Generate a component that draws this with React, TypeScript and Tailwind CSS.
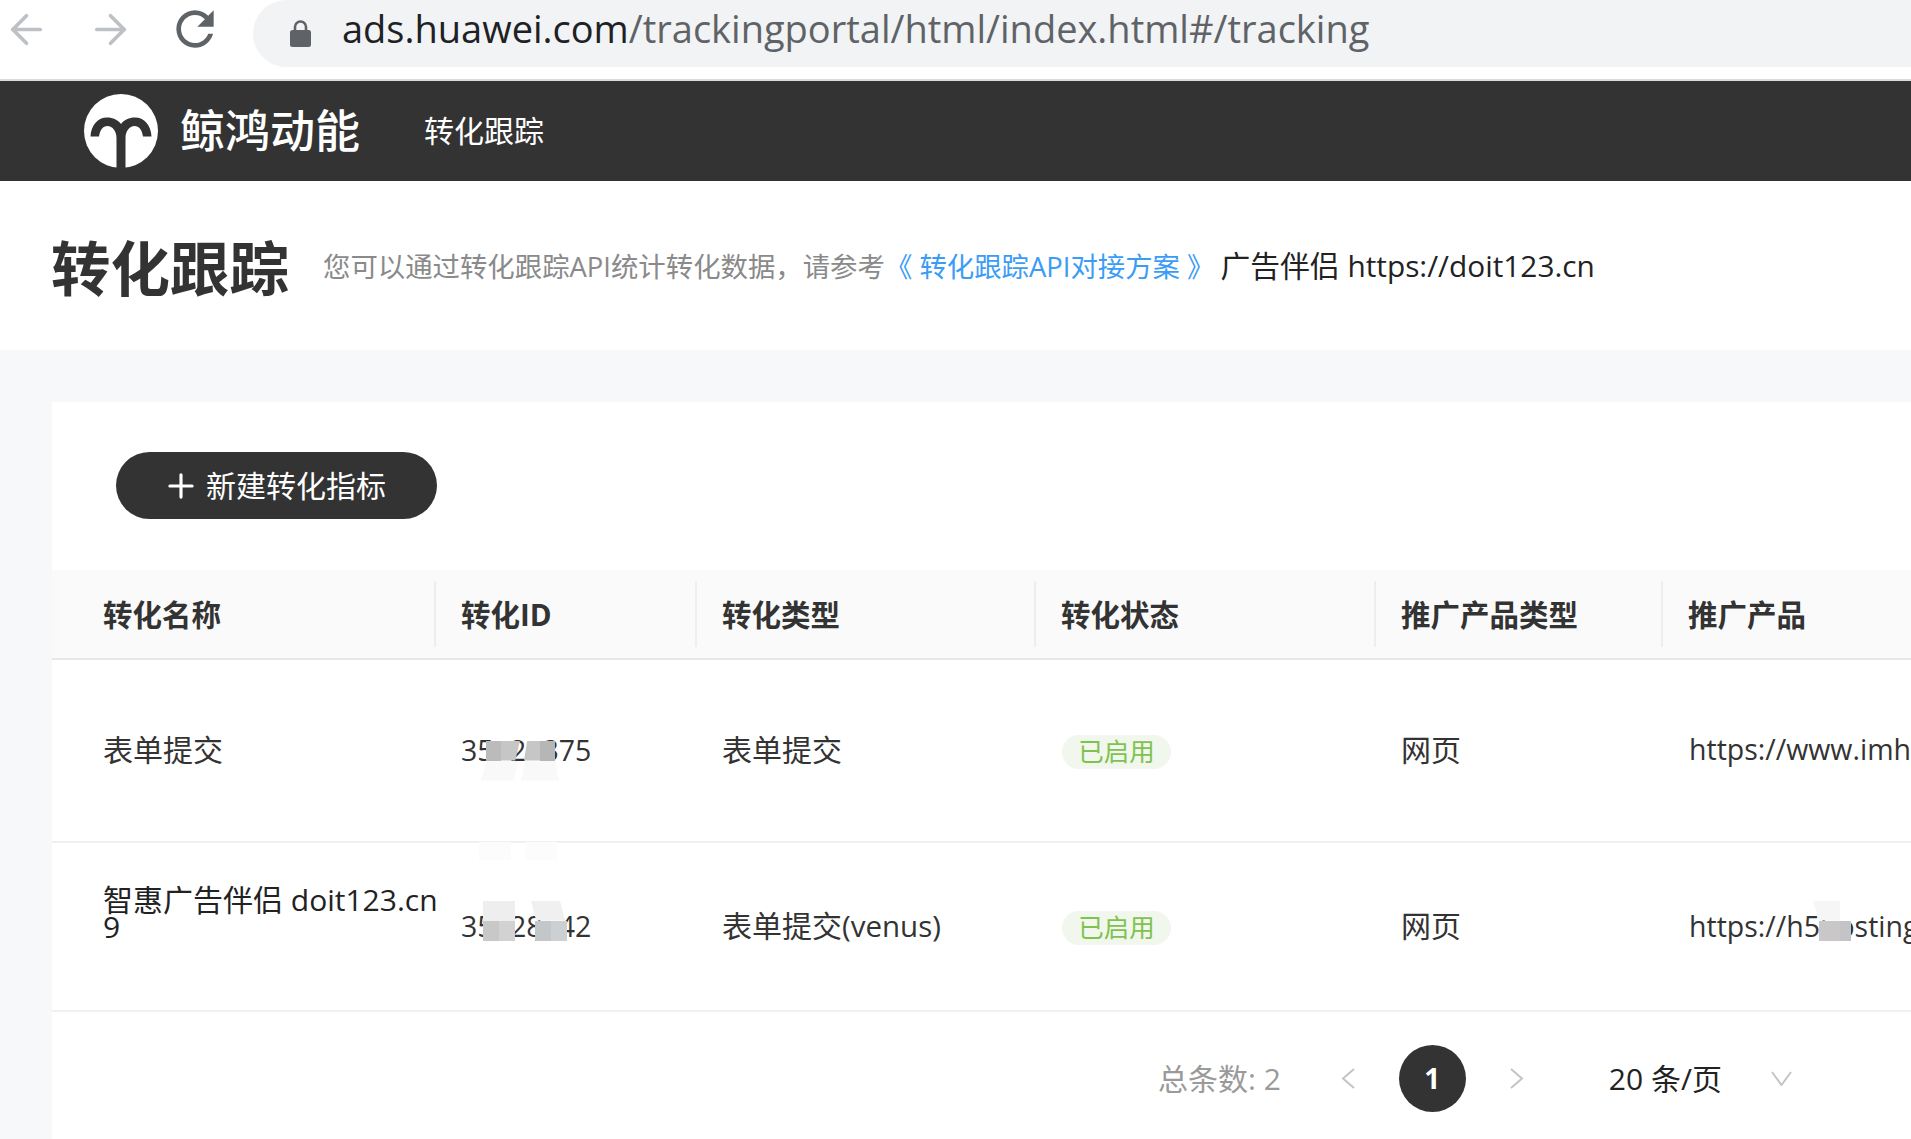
import { ArrowLeft, ArrowRight, Plus } from "lucide-react";

const font = "font-['Open_Sans','Noto_Sans_CJK_SC',sans-serif]";

const columns = ["转化名称", "转化ID", "转化类型", "转化状态", "推广产品类型", "推广产品"];
const colClass = "grid grid-cols-[383px_261px_339px_340px_287px_1fr]";

function Logo() {
  return (
    <svg viewBox="0 0 74 74" className="h-[74px] w-[74px] shrink-0">
      <circle cx="37" cy="37" r="37" fill="#fff" />
      <path
        d="M6.5 42.5C7 31 14 23.5 23 23.5c6 0 11 2.500 14 6.500 3-4 8-6.500 14-6.500 9 0 16 7.500 16.500 19H59c-1-6.500-4-10.500-8.500-10.500-5 0-9 5-9 12v30h-9V44c0-7-4-12-9-12-4.500 0-7.500 4-8.500 10.500z"
        fill="#333"
      />
    </svg>
  );
}

function Padlock() {
  return (
    <svg viewBox="0 0 21 28" className="mb-[2px] h-[28px] w-[21px] shrink-0" fill="#5f6368">
      <path d="M5 12V8a5.500 5.500 0 0 1 11 0v4" fill="none" stroke="#5f6368" strokeWidth="2.600" />
      <rect x="0" y="11" width="21" height="17" rx="2.500" />
    </svg>
  );
}

function Patch({ className }: { className: string }) {
  return <span className={`absolute ${className}`} />;
}

function Status() {
  return (
    <span className="inline-flex h-[34px] w-[109px] items-center justify-center rounded-full bg-[#f1f7ec] text-[#7fc24f]">
      <span className="text-[25.500px] leading-none">已启用</span>
    </span>
  );
}

export default function App() {
  return (
    <div className={`${font} h-[1139px] w-[1911px] overflow-hidden bg-[#f7f8fa] text-[#333]`}>
      <div className="flex h-[79px] items-start bg-white">
        <div className="flex h-[58px] w-[253px] shrink-0 items-center pl-[3px] text-[#bdc1c6]">
          <ArrowLeft size={47} strokeWidth={1.900} />
          <ArrowRight size={47} strokeWidth={1.900} className="ml-[37px]" />
          <svg viewBox="0 0 24 24" className="ml-[33px] h-[56px] w-[56px] shrink-0" fill="#5f6368">
            <path d="M17.650 6.350C16.200 4.900 14.210 4 12 4c-4.420 0-7.990 3.580-7.990 8s3.570 8 7.990 8c3.730 0 6.840-2.550 7.730-6h-2.080c-.82 2.330-3.040 4-5.650 4-3.310 0-6-2.690-6-6s2.690-6 6-6c1.660 0 3.140.69 4.220 1.780L13 11h7V4l-2.350 2.350z" />
          </svg>
        </div>
        <div className="flex h-[67px] flex-1 items-center rounded-l-[34px] bg-[#f1f3f4] pl-[37px] text-[38px]">
          <Padlock />
          <span className="mb-[11px] ml-[31px] whitespace-nowrap text-[#202124]">
            ads.huawei.com<span className="text-[#5f6368]">/trackingportal/html/index.html#/tracking</span>
          </span>
        </div>
      </div>

      <header className="flex h-[102px] items-center border-t-2 border-[#dadce0] bg-[#333] pl-[84px] text-white">
        <Logo />
        <span className="ml-[22px] text-[45px] font-medium">鲸鸿动能</span>
        <span className="mb-[2px] ml-[64px] text-[30px]">转化跟踪</span>
      </header>

      <div className="flex h-[169px] items-center bg-white pl-[51px]">
        <h1 className="pt-[4px] text-[59.500px] font-bold">转化跟踪</h1>
        <p className="ml-[34px] pt-[2px] text-[27.400px] text-[#8a8a8a]">
          您可以通过转化跟踪API统计转化数据，请参考
          <span className="text-[#3b9cf5]">《 转化跟踪API对接方案 》</span>
          <span className="ml-[6px] text-[29.800px] text-[#222]">广告伴侣 https://doit123.cn</span>
        </p>
      </div>

      <main className="ml-[52px] mt-[52px] h-[737px] bg-white">
        <div className="flex h-[168px] items-start pl-[64px] pt-[50px]">
          <button className="flex h-[67px] w-[321px] items-center rounded-full bg-[#333] pl-[46px] text-[30px] text-white">
            <Plus size={38} strokeWidth={2} />
            <span className="ml-[6px]">新建转化指标</span>
          </button>
        </div>

        <div className={`${colClass} h-[90px] items-center border-b-2 border-[#e8e8e8] bg-[#fafafa] text-[29.500px] font-bold`}>
          {columns.map((title, i) => (
            <div
              key={title}
              className={`flex h-[66px] items-center whitespace-nowrap pt-[2px] ${i === 0 ? "pl-[51px]" : "-ml-px border-l-2 border-[#eeeeee] pl-[25px]"}`}
            >
              {title}
            </div>
          ))}
        </div>

        <div className={`${colClass} h-[183px] items-center border-b-2 border-[#f0f0f0] pb-[2px] text-[30px]`}>
          <div className="pl-[51px]">表单提交</div>
          <div className="relative pl-[26px] text-[28.500px] leading-[42px]">
            35{"\u2007"}2{"\u2007"}375
            <Patch className="left-[51px] top-[12px] h-[20px] w-[15px] bg-[#bbbbbb]" />
            <Patch className="left-[66px] top-[12px] h-[20px] w-[19px] bg-[#c6c6c6] [clip-path:polygon(0_0,100%_0,75%_100%,0_100%)]" />
            <Patch className="left-[89px] top-[12px] h-[20px] w-[16px] bg-[#c6c6c6] [clip-path:polygon(20%_0,100%_0,100%_100%,0_100%)]" />
            <Patch className="left-[105px] top-[12px] h-[20px] w-[15px] bg-[#b6b6b6]" />
            <Patch className="left-[46px] top-[32px] h-[20px] w-[38px] bg-[#f9f9f9] [clip-path:polygon(15%_0,100%_0,85%_100%,0_100%)]" />
            <Patch className="left-[86px] top-[32px] h-[20px] w-[38px] bg-[#f9f9f9] [clip-path:polygon(10%_0,90%_0,100%_100%,0_100%)]" />
            <Patch className="left-[44px] top-[113px] h-[18px] w-[32px] bg-[#fcfcfc]" />
            <Patch className="left-[91px] top-[113px] h-[18px] w-[31px] bg-[#fcfcfc]" />
          </div>
          <div className="pl-[26px]">表单提交</div>
          <div className="pl-[27px]"><Status /></div>
          <div className="pl-[26px]">网页</div>
          <div className="whitespace-nowrap pl-[27px] text-[28.500px]">https://www.imh</div>
        </div>

        <div className={`${colClass} h-[169px] items-center border-b-2 border-[#f0f0f0] pb-[2px] text-[30px]`}>
          <div className="whitespace-nowrap pb-[26px] pl-[51px] leading-[27px] text-[#222]">
            智惠广告伴侣 doit123.cn
            <br />9
          </div>
          <div className="relative pl-[26px] text-[28.500px] leading-[42px]">
            35{"\u2007"}28{"\u2007"}42
            <Patch className="left-[48px] top-[-4px] h-[20px] w-[32px] bg-[#eeeeee]" />
            <Patch className="left-[48px] top-[16px] h-[20px] w-[16px] bg-[#c8c8c8]" />
            <Patch className="left-[64px] top-[16px] h-[20px] w-[16px] bg-[#d2d2d2]" />
            <Patch className="left-[96px] top-[-4px] h-[20px] w-[34px] bg-[#f0f0f0] [clip-path:polygon(0_0,85%_0,100%_100%,15%_100%)]" />
            <Patch className="left-[100px] top-[16px] h-[20px] w-[16px] bg-[#c4c7c9]" />
            <Patch className="left-[116px] top-[16px] h-[20px] w-[16px] bg-[#cdd0d2]" />
          </div>
          <div className="pl-[26px]">
            表单提交<span className="text-[29.500px]">(venus)</span>
          </div>
          <div className="pl-[27px]"><Status /></div>
          <div className="pl-[26px]">网页</div>
          <div className="relative whitespace-nowrap pl-[27px] text-[28.500px] leading-[42px]">
            https://h5hosting
            <Patch className="left-[151px] top-[-4px] h-[20px] w-[27px] bg-[#f6f6f6] [clip-path:polygon(0_0,100%_0,100%_100%,22%_100%)]" />
            <Patch className="left-[157px] top-[16px] h-[20px] w-[21px] bg-[#c9c7c7]" />
            <Patch className="left-[178px] top-[16px] h-[20px] w-[11px] bg-[#c4c4c6]" />
          </div>
        </div>

        <div className="flex h-[132px] items-center pl-[1106px] text-[30px]">
          <span className="shrink-0 text-[#9a9a9a]">总条数: 2</span>
          <svg viewBox="0 0 14 21" className="ml-[60px] h-[21px] w-[14px] shrink-0 fill-none stroke-[#c4c4c4] stroke-[2]">
            <path d="M13 1 2 10.500 13 20" />
          </svg>
          <span className="ml-[44px] flex h-[67px] w-[67px] shrink-0 items-center justify-center rounded-full bg-[#333] text-[28px] font-bold text-white">
            1
          </span>
          <svg viewBox="0 0 14 21" className="ml-[44px] h-[21px] w-[14px] shrink-0 fill-none stroke-[#c4c4c4] stroke-[2]">
            <path d="M1 1 12 10.500 1 20" />
          </svg>
          <span className="ml-[85px] shrink-0 whitespace-nowrap text-[#222]">20 条/页</span>
          <svg viewBox="0 0 21 15" className="ml-[49px] h-[15px] w-[21px] shrink-0 fill-none stroke-[#c4c4c4] stroke-[2]">
            <path d="M1 1 10.500 14 20 1" />
          </svg>
        </div>
      </main>
    </div>
  );
}
